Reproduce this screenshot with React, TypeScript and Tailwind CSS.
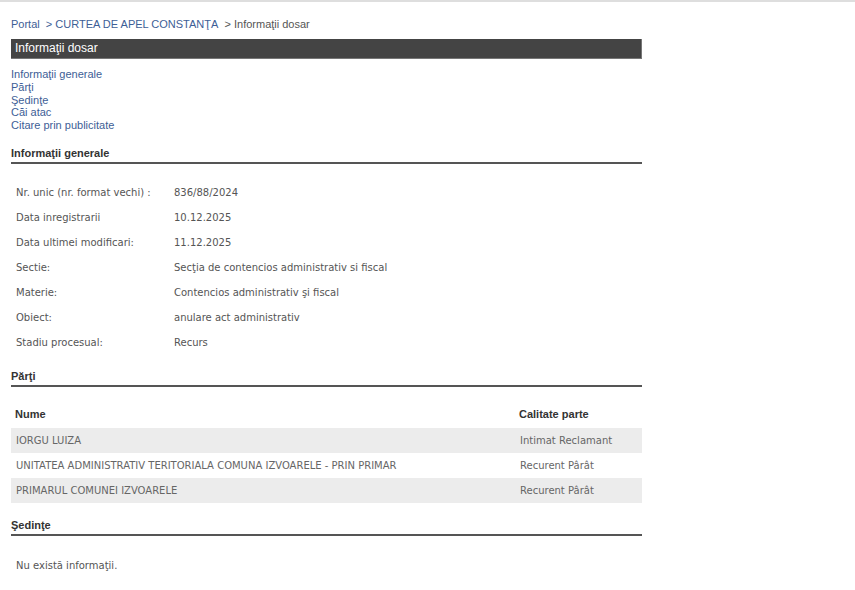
import React from "react";

const info: [string, string][] = [
  ["Nr. unic (nr. format vechi) :", "836/88/2024"],
  ["Data inregistrarii", "10.12.2025"],
  ["Data ultimei modificari:", "11.12.2025"],
  ["Sectie:", "Secţia de contencios administrativ si fiscal"],
  ["Materie:", "Contencios administrativ şi fiscal"],
  ["Obiect:", "anulare act administrativ"],
  ["Stadiu procesual:", "Recurs"],
];

const parti: [string, string][] = [
  ["IORGU LUIZA", "Intimat Reclamant"],
  ["UNITATEA ADMINISTRATIV TERITORIALA COMUNA IZVOARELE - PRIN PRIMAR", "Recurent Pârât"],
  ["PRIMARUL COMUNEI IZVOARELE", "Recurent Pârât"],
];

const arial = "font-['Liberation_Sans',Arial,sans-serif]";
const verd = "font-['DejaVu_Sans',Verdana,sans-serif]";

function SectionHeader({ title }: { title: string }) {
  return (
    <div className={`${arial} text-[11px] font-bold text-[#333] leading-[14px] pb-[2px] border-b-2 border-[#555]`}>
      {title}
    </div>
  );
}

export default function App() {
  return (
    <div className="w-[855px] h-[590px] bg-white border-t-2 border-[#dedede] overflow-hidden">
      <div className="ml-[11px] w-[631px]">
        <div className={`${arial} text-[11px] leading-[14px] pt-[15px] text-[#555]`}>
          <span className="text-[#3d5e96]">Portal</span>
          <span className="text-[#3d5e96]">&nbsp; &gt; CURTEA DE APEL CONSTANŢA</span>
          <span>&nbsp; &gt; Informaţii dosar</span>
        </div>
        <div className={`${arial} mt-[8px] h-[20px] bg-[#444] border-r border-b border-[#777] text-white text-[12px] leading-[19px] pl-[4px]`}>
          Informaţii dosar
        </div>
        <div className={`${arial} mt-[9px] flex flex-col text-[11px] leading-[12.75px] text-[#3d5e96]`}>
          <span>Informaţii generale</span>
          <span>Părţi</span>
          <span>Şedinţe</span>
          <span>Căi atac</span>
          <span>Citare prin publicitate</span>
        </div>

        <div className="mt-[14px]">
          <SectionHeader title="Informaţii generale" />
        </div>
        <div className={`${verd} mt-[16px] text-[10px] text-[#555]`}>
          {info.map(([k, v]) => (
            <div key={k} className="flex h-[25px] items-center">
              <div className="w-[163px] pl-[5px]">{k}</div>
              <div>{v}</div>
            </div>
          ))}
        </div>

        <div className="mt-[14px]">
          <SectionHeader title="Părţi" />
        </div>
        <div className={`${arial} mt-[15px] flex h-[25px] items-center text-[11px] font-bold text-[#333]`}>
          <div className="flex-1 pl-[4px]">Nume</div>
          <div className="w-[124px] pl-[1px]">Calitate parte</div>
        </div>
        <div className={`${verd} mt-[1px] text-[10px] text-[#666]`}>
          {parti.map(([n, c], i) => (
            <div key={i} className={`flex h-[25px] items-center ${i % 2 === 0 ? "bg-[#ececec]" : "bg-white"}`}>
              <div className="flex-1 pl-[5px]">{n}</div>
              <div className="w-[122px]">{c}</div>
            </div>
          ))}
        </div>

        <div className="mt-[15px]">
          <SectionHeader title="Şedinţe" />
        </div>
        <div className={`${verd} mt-[22px] pl-[5px] text-[10px] text-[#555]`}>Nu există informaţii.</div>
      </div>
    </div>
  );
}
